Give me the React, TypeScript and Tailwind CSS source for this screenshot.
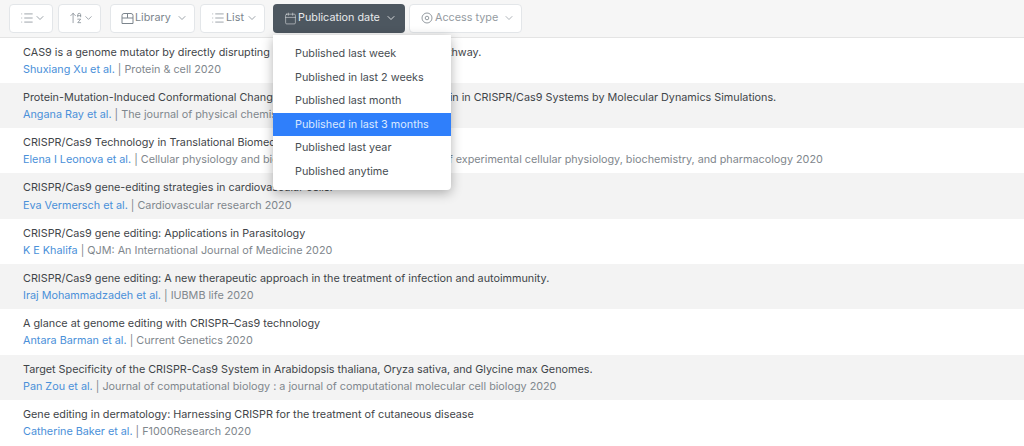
import { Calendar, ChevronDown, List, ArrowUpAZ } from "lucide-react";
import type { ReactNode } from "react";

const articles = [
    { title: "CAS9 is a genome mutator by directly disrupting DNA-PK dependent DNA repair pathway.", author: "Shuxiang Xu et al.", source: "Protein & cell 2020" },
    { title: "Protein-Mutation-Induced Conformational Changes of the DNA and Nuclease Domain in CRISPR/Cas9 Systems by Molecular Dynamics Simulations.", author: "Angana Ray et al.", source: "The journal of physical chemistry. B 2020" },
    { title: "CRISPR/Cas9 Technology in Translational Biomedical Research", author: "Elena I Leonova et al.", source: "Cellular physiology and biochemistry : international journal of experimental cellular physiology, biochemistry, and pharmacology 2020" },
    { title: "CRISPR/Cas9 gene-editing strategies in cardiovascular cells.", author: "Eva Vermersch et al.", source: "Cardiovascular research 2020" },
    { title: "CRISPR/Cas9 gene editing: Applications in Parasitology", author: "K E Khalifa", source: "QJM: An International Journal of Medicine 2020" },
    { title: "CRISPR/Cas9 gene editing: A new therapeutic approach in the treatment of infection and autoimmunity.", author: "Iraj Mohammadzadeh et al.", source: "IUBMB life 2020" },
    { title: "A glance at genome editing with CRISPR–Cas9 technology", author: "Antara Barman et al.", source: "Current Genetics 2020" },
    { title: "Target Specificity of the CRISPR-Cas9 System in Arabidopsis thaliana, Oryza sativa, and Glycine max Genomes.", author: "Pan Zou et al.", source: "Journal of computational biology : a journal of computational molecular cell biology 2020" },
    { title: "Gene editing in dermatology: Harnessing CRISPR for the treatment of cutaneous disease", author: "Catherine Baker et al.", source: "F1000Research 2020" },
];

const dateOptions = [
    "Published last week",
    "Published in last 2 weeks",
    "Published last month",
    "Published in last 3 months",
    "Published last year",
    "Published anytime",
];

function LibraryIcon() {
    return (
        <svg width="13" height="13" viewBox="0 0 13 13" fill="none" stroke="currentColor" strokeWidth="1">
            <path d="M3 1.5h7a2 2 0 0 1 2 2v8h-11v-8a2 2 0 0 1 2-2z" />
            <path d="M1 6h11M6.5 1.5V6" />
        </svg>
    );
}

function AccessIcon() {
    return (
        <svg width="14" height="14" viewBox="0 0 14 14" fill="none" stroke="currentColor" strokeWidth="1">
            <circle cx="7" cy="7" r="5" />
            <circle cx="7" cy="7" r="1.8" />
        </svg>
    );
}

function FilterButton({ icon, label, className }: { icon: ReactNode; label?: string; className: string }) {
    return (
        <button className={`flex h-[29px] items-center justify-between whitespace-nowrap rounded border border-[#e3e6e9] bg-white pl-[10px] pr-[6px] ${className}`}>
            <span className="flex items-center gap-[1px]">
                {icon}
                {label && <span>{label}</span>}
            </span>
            <ChevronDown size={12} strokeWidth={1.5} />
        </button>
    );
}

export default function App() {
    return (
        <div className="relative h-[446px] w-[1024px] overflow-hidden bg-white font-['Inter',sans-serif] text-[10.8px]">
            <div className="flex h-[37.5px] items-start border-b border-[#e4e4e4] bg-[#f6f6f6] pl-[9px] pt-[3.5px]">
                <FilterButton icon={<List size={14} strokeWidth={1.25} />} className="w-[44px] text-[#7c858d]" />
                <FilterButton icon={<ArrowUpAZ size={14} strokeWidth={1.25} />} className="ml-[5px] w-[43px] text-[#7c858d]" />
                <FilterButton icon={<LibraryIcon />} label="Library" className="ml-[9px] w-[85px] text-[#7c858d]" />
                <FilterButton icon={<List size={14} strokeWidth={1.25} />} label="List" className="ml-[5px] w-[65px] text-[#7c858d]" />
                <button className="ml-[8px] flex h-[29px] w-[132px] items-center justify-between whitespace-nowrap rounded bg-[#4d5760] pl-[11px] pr-[8px] text-[#e8eaec]">
                    <span className="flex items-center gap-[1px]">
                        <Calendar size={13} strokeWidth={1} />
                        <span>Publication date</span>
                    </span>
                    <ChevronDown size={12} strokeWidth={1.75} />
                </button>
                <FilterButton icon={<AccessIcon />} label="Access type" className="ml-[4px] w-[113px] text-[#949ba1]" />
            </div>

            <div>
                {articles.map((a, i) => (
                    <div
                        key={a.title}
                        className={`h-[45.3px] pl-[23px] pt-[6px] leading-[17.2px] ${i % 2 === 1 ? "bg-[#f3f3f3]" : "bg-white"}`}
                    >
                        <div className="whitespace-nowrap text-[#3f4549]">{a.title}</div>
                        <div className="whitespace-nowrap text-[#7f878d]">
                            <span className="text-[#4a90d9]">{a.author}</span> | {a.source}
                        </div>
                    </div>
                ))}
            </div>

            <div className="absolute left-[273px] top-[35px] w-[178px] rounded-b-sm bg-white pb-[7px] pt-[7px] shadow-[0_3px_12px_rgba(0,0,0,0.3)]">
                {dateOptions.map((o) => (
                    <div
                        key={o}
                        className={`h-[23.5px] pl-[22px] leading-[23px] ${o === "Published in last 3 months" ? "bg-[#2f7ffb] text-[#dbe9ff]" : "text-[#474d52]"}`}
                    >
                        {o}
                    </div>
                ))}
            </div>
        </div>
    );
}
